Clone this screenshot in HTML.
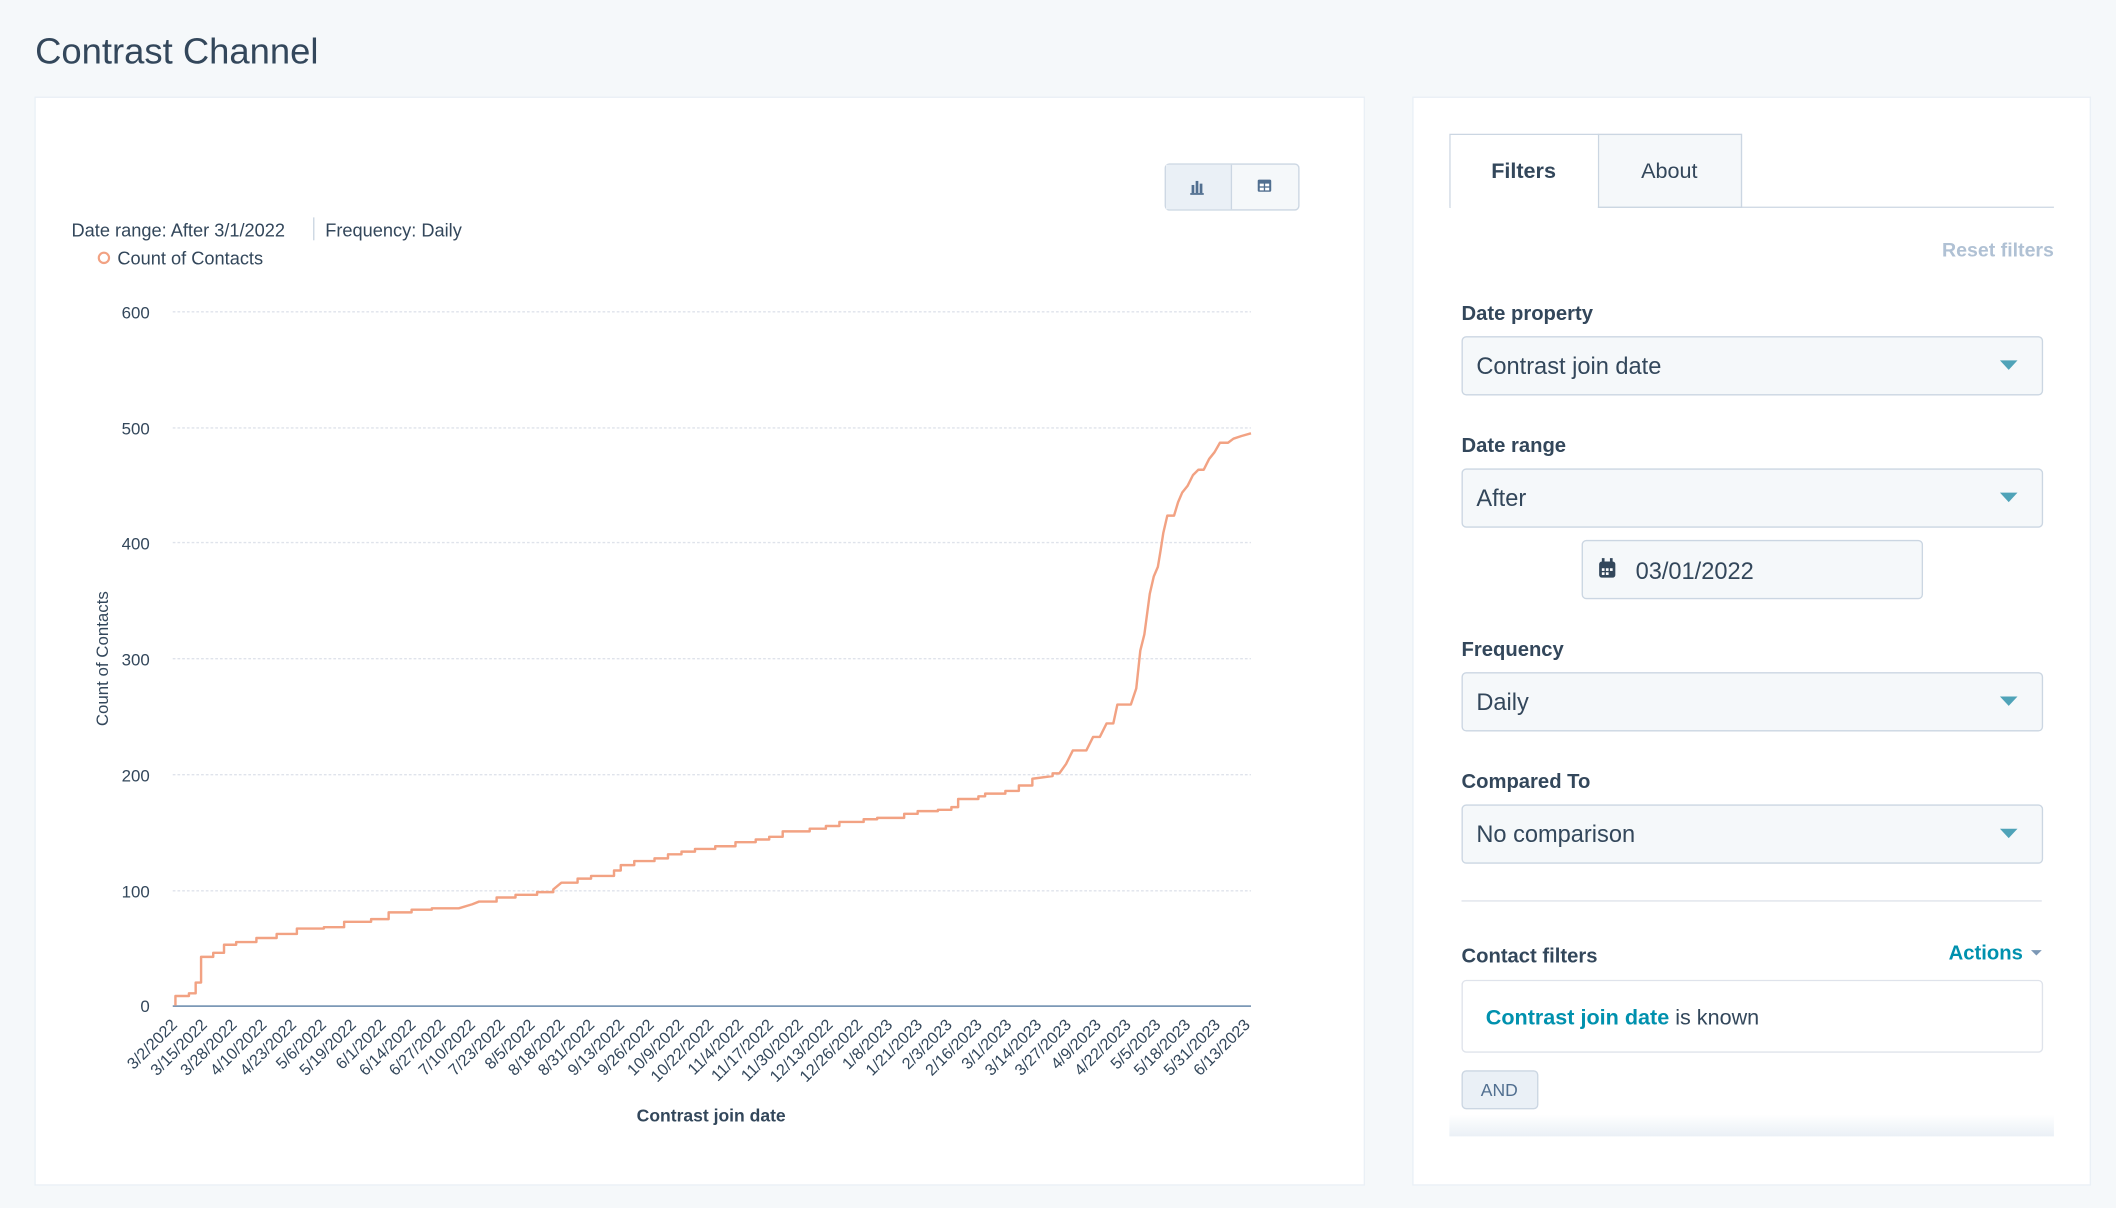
<!DOCTYPE html>
<html><head><meta charset="utf-8"><style>
html,body{margin:0;padding:0;background:#f5f8fa;}
svg{display:block;font-family:"Liberation Sans",sans-serif;}
</style></head><body>
<svg width="2116" height="1208" viewBox="0 0 1568 895" xmlns="http://www.w3.org/2000/svg">
<rect width="1568" height="895" fill="#f5f8fa"/>
<text x="26" y="47" font-size="27" fill="#33475b">Contrast Channel</text>
<!-- left card -->
<rect x="26" y="72" width="985" height="806" fill="#fff" stroke="#eaf0f6" stroke-width="1"/>
<!-- toggle -->
<rect x="863.5" y="121.5" width="99" height="34" rx="3" fill="#f5f8fa" stroke="#cbd6e2"/>
<rect x="864" y="122" width="48" height="33" fill="#eaf0f6"/>
<line x1="912.5" y1="122" x2="912.5" y2="155" stroke="#cbd6e2"/>
<g fill="#516f90"><rect x="883" y="137" width="2" height="6"/><rect x="886" y="134" width="2" height="9"/><rect x="889" y="136" width="2" height="7"/><rect x="882" y="143" width="10" height="1.3"/></g>
<g fill="#516f90"><rect x="932" y="133" width="10" height="9" rx="1"/></g>
<g fill="#fff"><rect x="933.5" y="136" width="3" height="2"/><rect x="937.5" y="136" width="3" height="2"/><rect x="933.5" y="139" width="3" height="2"/><rect x="937.5" y="139" width="3" height="2"/></g>
<text x="53" y="175" font-size="13.5" fill="#33475b">Date range: After 3/1/2022</text>
<line x1="232.5" y1="161" x2="232.5" y2="178" stroke="#cbd6e2"/>
<text x="241" y="175" font-size="13.5" fill="#33475b">Frequency: Daily</text>
<circle cx="77" cy="191" r="3.8" fill="none" stroke="#f2a283" stroke-width="1.6"/>
<text x="87" y="196" font-size="13.5" fill="#33475b">Count of Contacts</text>
<!-- grid -->
<g stroke="#dfe3eb" stroke-dasharray="2,1.5" stroke-width="1">
<line x1="128" y1="231" x2="927" y2="231"/><line x1="128" y1="317" x2="927" y2="317"/><line x1="128" y1="402" x2="927" y2="402"/><line x1="128" y1="488" x2="927" y2="488"/><line x1="128" y1="574" x2="927" y2="574"/><line x1="128" y1="660" x2="927" y2="660"/>
</g>
<line x1="128" y1="745.5" x2="927" y2="745.5" stroke="#7c98b6" stroke-width="1.3"/>
<g font-size="12.5" fill="#33475b" text-anchor="end">
<text x="111" y="236">600</text><text x="111" y="322">500</text><text x="111" y="407">400</text><text x="111" y="493">300</text><text x="111" y="579">200</text><text x="111" y="665">100</text><text x="111" y="750">0</text>
</g>
<text transform="translate(80,488) rotate(-90)" font-size="12.5" fill="#33475b" text-anchor="middle">Count of Contacts</text>
<path fill="none" stroke="#f2a283" stroke-width="1.8" stroke-linejoin="round" d="M130 745 V738 H140 V736 H145 V728 H149 V709 H158 V706 H166 V700 H175 V698 H190 V695 H205 V692 H220 V688 H240 V687 H255 V683 H275 V681 H288 V676 H305 V674 H320 V673 H340 L350 670 L355 668 H368 V665 H382 V663 H398 V661 H410 V659 L416 654 H428 V651 H438 V649 H455 V645 L460 645 V641 H470 V638 H485 V636 H495 V633 H505 V631 H515 V629 H530 V627 H545 V624 H560 V622 H570 V620 H580 V616 H600 V614 H612 V612 H622 V609 H640 V607 H650 V606 H670 V603 H680 V601 H695 V600 H705 V598 H710 V592 H725 V590 H730 V588 H745 V586 H755 V582 H765 V577 L780 575 V573 H785 L790 566 L795 556 H805 L810 546 H815 L820 536 H825 L828 522 H838 L842 510 L845 482 L848 470 L852 440 L855 427 L858 420 L860 408 L862 395 L865 382 H870 L873 372 L876 365 L880 360 L884 352 L888 348 H892 L896 340 L900 335 L904 328 H910 L914 325 L920 323 L927 321"/>
<g font-size="12" fill="#33475b" text-anchor="end">
<text transform="translate(132,760) rotate(-45)">3/2/2022</text>
<text transform="translate(154.1,760) rotate(-45)">3/15/2022</text>
<text transform="translate(176.2,760) rotate(-45)">3/28/2022</text>
<text transform="translate(198.3,760) rotate(-45)">4/10/2022</text>
<text transform="translate(220.3,760) rotate(-45)">4/23/2022</text>
<text transform="translate(242.4,760) rotate(-45)">5/6/2022</text>
<text transform="translate(264.5,760) rotate(-45)">5/19/2022</text>
<text transform="translate(286.6,760) rotate(-45)">6/1/2022</text>
<text transform="translate(308.7,760) rotate(-45)">6/14/2022</text>
<text transform="translate(330.8,760) rotate(-45)">6/27/2022</text>
<text transform="translate(352.8,760) rotate(-45)">7/10/2022</text>
<text transform="translate(374.9,760) rotate(-45)">7/23/2022</text>
<text transform="translate(397,760) rotate(-45)">8/5/2022</text>
<text transform="translate(419.1,760) rotate(-45)">8/18/2022</text>
<text transform="translate(441.2,760) rotate(-45)">8/31/2022</text>
<text transform="translate(463.3,760) rotate(-45)">9/13/2022</text>
<text transform="translate(485.3,760) rotate(-45)">9/26/2022</text>
<text transform="translate(507.4,760) rotate(-45)">10/9/2022</text>
<text transform="translate(529.5,760) rotate(-45)">10/22/2022</text>
<text transform="translate(551.6,760) rotate(-45)">11/4/2022</text>
<text transform="translate(573.7,760) rotate(-45)">11/17/2022</text>
<text transform="translate(595.8,760) rotate(-45)">11/30/2022</text>
<text transform="translate(617.8,760) rotate(-45)">12/13/2022</text>
<text transform="translate(639.9,760) rotate(-45)">12/26/2022</text>
<text transform="translate(662,760) rotate(-45)">1/8/2023</text>
<text transform="translate(684.1,760) rotate(-45)">1/21/2023</text>
<text transform="translate(706.2,760) rotate(-45)">2/3/2023</text>
<text transform="translate(728.3,760) rotate(-45)">2/16/2023</text>
<text transform="translate(750.3,760) rotate(-45)">3/1/2023</text>
<text transform="translate(772.4,760) rotate(-45)">3/14/2023</text>
<text transform="translate(794.5,760) rotate(-45)">3/27/2023</text>
<text transform="translate(816.6,760) rotate(-45)">4/9/2023</text>
<text transform="translate(838.7,760) rotate(-45)">4/22/2023</text>
<text transform="translate(860.8,760) rotate(-45)">5/5/2023</text>
<text transform="translate(882.8,760) rotate(-45)">5/18/2023</text>
<text transform="translate(904.9,760) rotate(-45)">5/31/2023</text>
<text transform="translate(927,760) rotate(-45)">6/13/2023</text>
</g>
<text x="527" y="831" font-size="13" font-weight="bold" fill="#33475b" text-anchor="middle">Contrast join date</text>

<!-- right card -->
<rect x="1047" y="72" width="502" height="806" fill="#fff" stroke="#eaf0f6"/>
<line x1="1074" y1="153.5" x2="1522" y2="153.5" stroke="#cbd6e2"/>
<rect x="1184.5" y="99.5" width="106" height="54" fill="#f5f8fa" stroke="#cbd6e2"/>
<path d="M1074.5 153 V99.5 H1184.5" fill="none" stroke="#cbd6e2"/>
<rect x="1075" y="100" width="109" height="55" fill="#fff"/>
<text x="1129" y="132" font-size="16" font-weight="bold" fill="#33475b" text-anchor="middle">Filters</text>
<text x="1237" y="132" font-size="16" fill="#33475b" text-anchor="middle">About</text>
<text x="1522" y="190" font-size="14.5" font-weight="bold" fill="#b0c1d4" text-anchor="end">Reset filters</text>

<g font-size="15" font-weight="bold" fill="#33475b">
<text x="1083" y="237">Date property</text>
<text x="1083" y="335">Date range</text>
<text x="1083" y="486">Frequency</text>
<text x="1083" y="584">Compared To</text>
<text x="1083" y="713">Contact filters</text>
</g>
<g fill="#f5f8fa" stroke="#cbd6e2">
<rect x="1083.5" y="249.5" width="430" height="43" rx="3"/>
<rect x="1083.5" y="347.5" width="430" height="43" rx="3"/>
<rect x="1172.5" y="400.5" width="252" height="43" rx="3"/>
<rect x="1083.5" y="498.5" width="430" height="43" rx="3"/>
<rect x="1083.5" y="596.5" width="430" height="43" rx="3"/>
</g>
<g font-size="17.5" fill="#33475b">
<text x="1094" y="277">Contrast join date</text>
<text x="1094" y="375">After</text>
<text x="1212" y="429">03/01/2022</text>
<text x="1094" y="526">Daily</text>
<text x="1094" y="624">No comparison</text>
</g>
<g fill="#4fa3b8">
<path d="M1482 267 H1495 L1488.5 274 Z"/>
<path d="M1482 365 H1495 L1488.5 372 Z"/>
<path d="M1482 516 H1495 L1488.5 523 Z"/>
<path d="M1482 614 H1495 L1488.5 621 Z"/>
</g>
<rect x="1185" y="416" width="12" height="12" rx="2" fill="#33475b"/>
<rect x="1187" y="413.5" width="2" height="4" fill="#33475b"/><rect x="1193" y="413.5" width="2" height="4" fill="#33475b"/>
<g fill="#fff"><rect x="1187" y="421" width="2" height="2"/><rect x="1190" y="421" width="2" height="2"/><rect x="1193" y="421" width="2" height="2"/><rect x="1187" y="424" width="2" height="2"/><rect x="1190" y="424" width="2" height="2"/></g>
<line x1="1083" y1="667.5" x2="1513" y2="667.5" stroke="#dfe3eb"/>
<text x="1499" y="711" font-size="15" font-weight="bold" fill="#0091ae" text-anchor="end">Actions</text>
<path d="M1505 704 H1513 L1509 708 Z" fill="#7c98b6"/>
<rect x="1083.5" y="726.5" width="430" height="53" rx="3" fill="#fff" stroke="#dfe3eb"/>
<text x="1101" y="759" font-size="16"><tspan font-weight="bold" fill="#0091ae">Contrast join date</tspan><tspan fill="#33475b"> is known</tspan></text>
<rect x="1083.5" y="793.5" width="56" height="28" rx="3" fill="#eaf0f6" stroke="#cbd6e2"/>
<text x="1111" y="812" font-size="13" fill="#516f90" text-anchor="middle">AND</text>
<defs><linearGradient id="g" x1="0" y1="0" x2="0" y2="1"><stop offset="0" stop-color="#fff"/><stop offset="1" stop-color="#eaf0f6"/></linearGradient></defs>
<rect x="1074" y="826" width="448" height="16" fill="url(#g)"/>
</svg>
</body></html>
